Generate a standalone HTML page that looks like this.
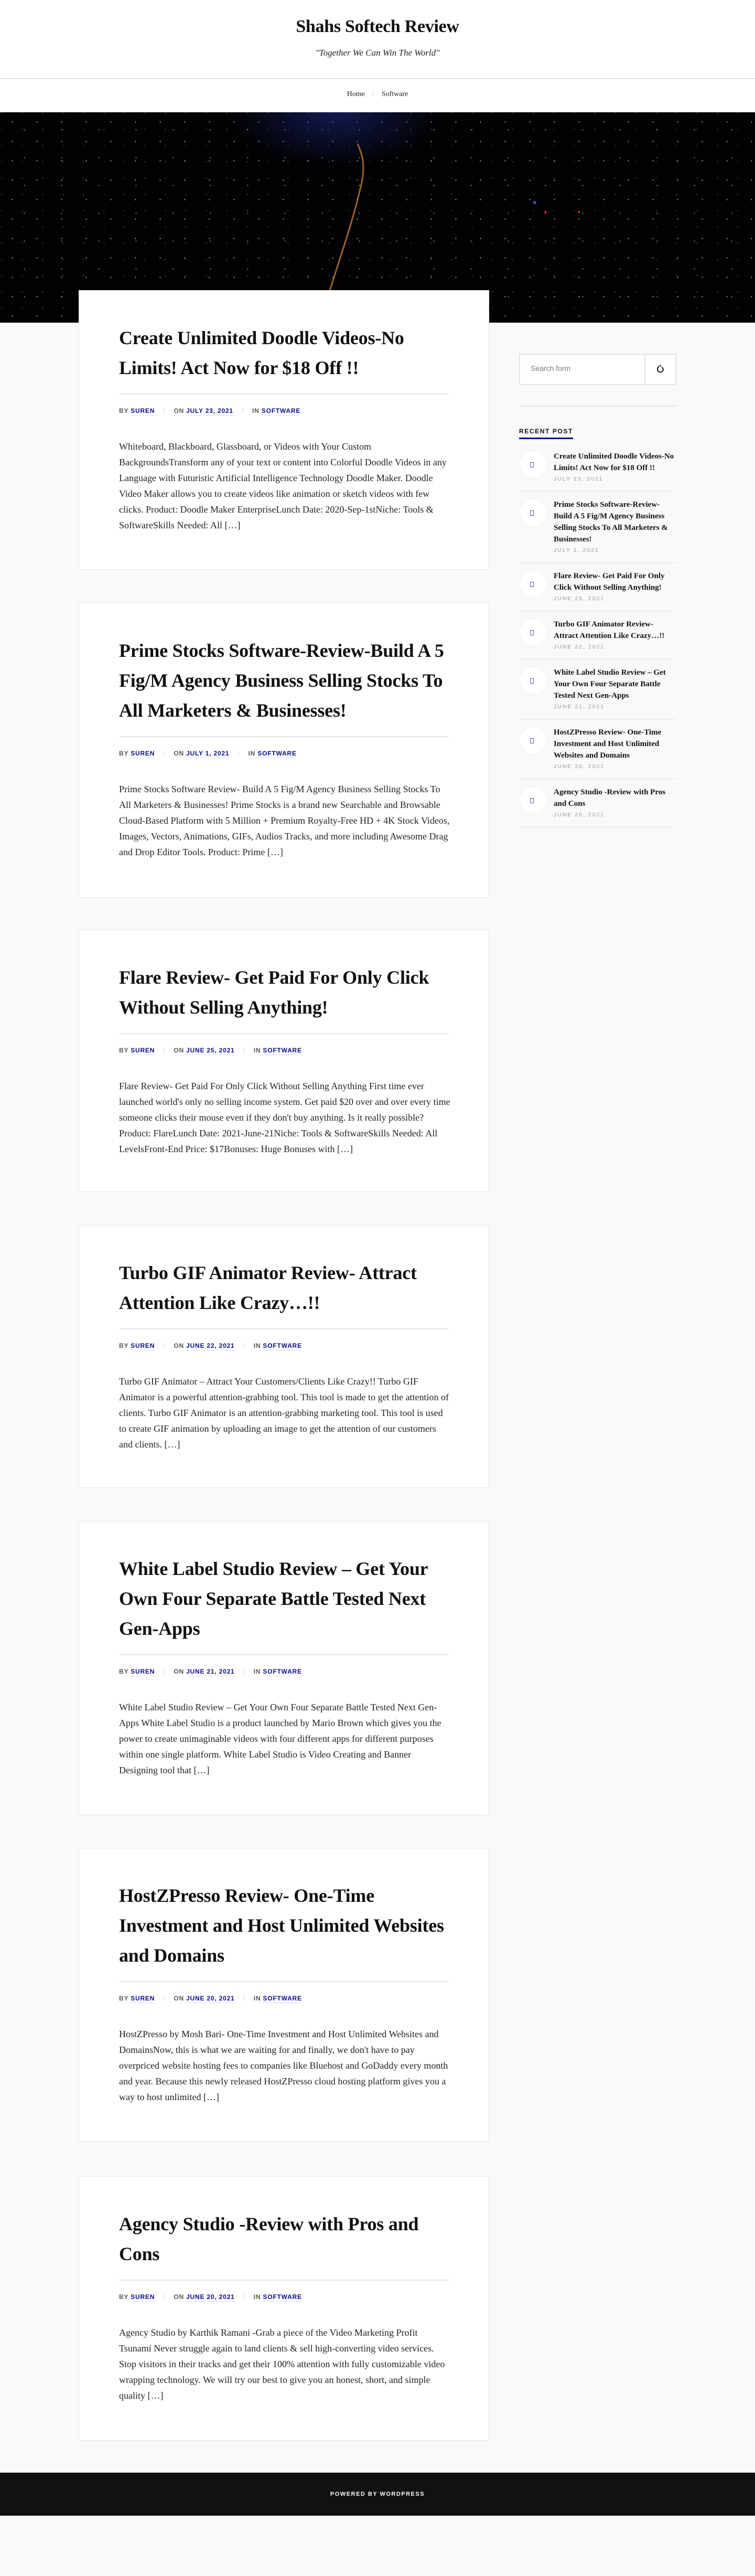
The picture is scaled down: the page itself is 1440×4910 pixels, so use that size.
<!DOCTYPE html>
<html><head><meta charset="utf-8"><style>
*{box-sizing:border-box;margin:0;padding:0}
body{width:1440px;height:4910px;background:#f9f9f9;font-family:"Liberation Serif",serif;color:#111;position:relative;overflow:hidden}
header{position:absolute;top:0;left:0;width:1440px;height:214px;background:#fff}
.site-title{position:absolute;top:32px;width:100%;text-align:center;font-size:34px;font-weight:bold;letter-spacing:-0.3px}
.tag{position:absolute;top:91px;width:100%;text-align:center;font-size:17px;font-style:italic;color:#222}
.hline{position:absolute;top:149px;left:0;width:100%;height:2px;background:#e2e2e2}
nav{position:absolute;top:172px;width:100%;text-align:center;font-size:14px;color:#222}
nav span.s{color:#ccc;margin:0 14px}
.hero{position:absolute;top:214px;left:0;width:1440px;height:401px;background:
radial-gradient(ellipse 200px 100px at 640px 0px,rgba(30,40,130,.6),transparent),
radial-gradient(circle,rgba(220,220,220,.8) 0.8px,transparent 1.3px) 0 0/47px 37px,
radial-gradient(circle,rgba(233,199,154,.7) 0.8px,transparent 1.3px) 11px 7px/71px 53px,
radial-gradient(circle,rgba(180,180,180,.5) 0.7px,transparent 1.2px) 23px 17px/39px 31px,
#020204}
.card{position:absolute;left:150px;width:783px;background:#fff;border:1px solid #e6e6e6;padding:62px 70px 0 76px}
.card h2{font-size:36px;line-height:57px;font-weight:bold;color:#111;letter-spacing:-0.2px;padding-bottom:20px;border-bottom:2px solid #e6e6e6;margin-right:6px}
.meta{margin-top:24px;font-family:"Liberation Sans",sans-serif;font-size:12px;font-weight:bold;letter-spacing:0.8px;color:#555;text-transform:uppercase}
.meta a{color:#0a0a8c;text-decoration:none;border-bottom:1px solid #ddd;padding-bottom:1px}
.meta .sl{color:#ccc;margin:0 16px;font-weight:normal}
.ex{margin-top:46px;font-size:18px;line-height:30px;color:#222}
.search{position:absolute;top:674px;left:990px;width:300px;height:60px;background:#fff;border:2px solid #e2e2e2}
.search .ph{position:absolute;left:20px;top:18px;font-family:"Liberation Sans",sans-serif;font-size:14px;color:#777}
.search .btn{position:absolute;right:0;top:0;width:59px;height:56px;border-left:2px solid #e2e2e2}
.rp{position:absolute;top:773px;left:990px;width:300px;border-top:2px solid #e4e4e4}
.rph{position:absolute;top:815px;left:990px;font-family:"Liberation Sans",sans-serif;font-weight:bold;font-size:12px;letter-spacing:1.6px;padding-bottom:5px;border-bottom:3px solid #0a0a8c;color:#111}
.list{position:absolute;top:845px;left:990px;width:300px}
.it{position:relative;padding:14px 0 15px 66px;border-bottom:1px solid #e4e4e4}
.it .th{position:absolute;left:0;top:13px;width:54px;height:54px;border-radius:50%;background:#fff;border:1px solid #eee}
.it .th:after{content:"";position:absolute;left:20px;top:22px;width:5px;height:8px;border:1px solid #5555bb}
.it .t{font-size:15px;line-height:22px;font-weight:bold;color:#111}
.it .d{font-family:"Liberation Sans",sans-serif;font-size:10.5px;letter-spacing:2px;color:#999;line-height:16px;margin-top:2px}
footer{position:absolute;top:4713px;left:0;width:1440px;height:82px;background:#111;color:#fff;text-align:center;font-family:"Liberation Sans",sans-serif;font-weight:bold;font-size:11px;letter-spacing:1.5px;line-height:82px}
</style></head><body>
<header>
<div class="site-title">Shahs Softech Review</div>
<div class="tag">"Together We Can Win The World"</div>
<div class="hline"></div>
<nav>Home<span class="s">/</span>Software</nav>
</header>
<div class="hero"><svg width="1440" height="401" style="position:absolute;left:0;top:0"><path d="M682 60 C690 80 700 100 686 150 C670 220 640 300 610 401" stroke="#d88a3a" stroke-width="3" fill="none" opacity=".7"/><circle cx="1020" cy="172" r="3" fill="#3b4bd8"/><circle cx="1040" cy="190" r="2" fill="#d22"/><circle cx="1104" cy="190" r="2" fill="#d22"/></svg></div>

<div class="card" style="top:553px;height:533px">
<h2>Create Unlimited Doodle Videos-No Limits! Act Now for $18 Off !!</h2>
<div class="meta">By <a>Suren</a><span class="sl">/</span>On <a>July 23, 2021</a><span class="sl">/</span>In <a>Software</a></div>
<div class="ex">Whiteboard, Blackboard, Glassboard, or Videos with Your Custom BackgroundsTransform any of your text or content into Colorful Doodle Videos in any Language with Futuristic Artificial Intelligence Technology Doodle Maker. Doodle Video Maker allows you to create videos like animation or sketch videos with few clicks. Product: Doodle Maker EnterpriseLunch Date: 2020-Sep-1stNiche: Tools &amp; SoftwareSkills Needed: All […]</div>
</div>

<div class="card" style="top:1149px;height:562px">
<h2>Prime Stocks Software-Review-Build A 5 Fig/M Agency Business Selling Stocks To All Marketers &amp; Businesses!</h2>
<div class="meta">By <a>Suren</a><span class="sl">/</span>On <a>July 1, 2021</a><span class="sl">/</span>In <a>Software</a></div>
<div class="ex">Prime Stocks Software Review- Build A 5 Fig/M Agency Business Selling Stocks To All Marketers &amp; Businesses! Prime Stocks is a brand new Searchable and Browsable Cloud-Based Platform with 5 Million + Premium Royalty-Free HD + 4K Stock Videos, Images, Vectors, Animations, GIFs, Audios Tracks, and more including Awesome Drag and Drop Editor Tools. Product: Prime […]</div>
</div>

<div class="card" style="top:1772px;height:500px">
<h2>Flare Review- Get Paid For Only Click Without Selling Anything!</h2>
<div class="meta">By <a>Suren</a><span class="sl">/</span>On <a>June 25, 2021</a><span class="sl">/</span>In <a>Software</a></div>
<div class="ex">Flare Review- Get Paid For Only Click Without Selling Anything First time ever launched world's only no selling income system. Get paid $20 over and over every time someone clicks their mouse even if they don't buy anything. Is it really possible? Product: FlareLunch Date: 2021-June-21Niche: Tools &amp; SoftwareSkills Needed: All LevelsFront-End Price: $17Bonuses: Huge Bonuses with […]</div>
</div>

<div class="card" style="top:2335px;height:501px">
<h2>Turbo GIF Animator Review- Attract Attention Like Crazy…!!</h2>
<div class="meta">By <a>Suren</a><span class="sl">/</span>On <a>June 22, 2021</a><span class="sl">/</span>In <a>Software</a></div>
<div class="ex">Turbo GIF Animator – Attract Your Customers/Clients Like Crazy!! Turbo GIF Animator is a powerful attention-grabbing tool. This tool is made to get the attention of clients. Turbo GIF Animator is an attention-grabbing marketing tool. This tool is used to create GIF animation by uploading an image to get the attention of our customers and clients. […]</div>
</div>

<div class="card" style="top:2899px;height:561px">
<h2>White Label Studio Review – Get Your Own Four Separate Battle Tested Next Gen-Apps</h2>
<div class="meta">By <a>Suren</a><span class="sl">/</span>On <a>June 21, 2021</a><span class="sl">/</span>In <a>Software</a></div>
<div class="ex">White Label Studio Review – Get Your Own Four Separate Battle Tested Next Gen-Apps White Label Studio is a product launched by Mario Brown which gives you the power to create unimaginable videos with four different apps for different purposes within one single platform. White Label Studio is Video Creating and Banner Designing tool that […]</div>
</div>

<div class="card" style="top:3522px;height:561px">
<h2>HostZPresso Review- One-Time Investment and Host Unlimited Websites and Domains</h2>
<div class="meta">By <a>Suren</a><span class="sl">/</span>On <a>June 20, 2021</a><span class="sl">/</span>In <a>Software</a></div>
<div class="ex">HostZPresso by Mosh Bari- One-Time Investment and Host Unlimited Websites and DomainsNow, this is what we are waiting for and finally, we don't have to pay overpriced website hosting fees to companies like Bluehost and GoDaddy every month and year. Because this newly released HostZPresso cloud hosting platform gives you a way to host unlimited […]</div>
</div>

<div class="card" style="top:4148px;height:504px">
<h2>Agency Studio -Review with Pros and Cons</h2>
<div class="meta">By <a>Suren</a><span class="sl">/</span>On <a>June 20, 2021</a><span class="sl">/</span>In <a>Software</a></div>
<div class="ex">Agency Studio by Karthik Ramani -Grab a piece of the Video Marketing Profit Tsunami Never struggle again to land clients &amp; sell high-converting video services. Stop visitors in their tracks and get their 100% attention with fully customizable video wrapping technology. We will try our best to give you an honest, short, and simple quality […]</div>
</div>

<div class="search"><div class="ph">Search form</div><div class="btn"><svg width="59" height="56"><path d="M26 22 C23 25 22 28 24 31 C26 34 31 34 33 31 C35 28 33 25 31 24" stroke="#111" stroke-width="2" fill="none"/><path d="M27 20 L30 22" stroke="#111" stroke-width="2"/></svg></div></div>
<div class="rp"></div>
<div class="rph">RECENT POST</div>
<div class="list">
<div class="it"><div class="th"></div><div class="t">Create Unlimited Doodle Videos-No Limits! Act Now for $18 Off !!</div><div class="d">JULY 23, 2021</div></div>
<div class="it"><div class="th"></div><div class="t">Prime Stocks Software-Review-Build A 5 Fig/M Agency Business Selling Stocks To All Marketers &amp; Businesses!</div><div class="d">JULY 1, 2021</div></div>
<div class="it"><div class="th"></div><div class="t">Flare Review- Get Paid For Only Click Without Selling Anything!</div><div class="d">JUNE 25, 2021</div></div>
<div class="it"><div class="th"></div><div class="t">Turbo GIF Animator Review- Attract Attention Like Crazy…!!</div><div class="d">JUNE 22, 2021</div></div>
<div class="it"><div class="th"></div><div class="t">White Label Studio Review – Get Your Own Four Separate Battle Tested Next Gen-Apps</div><div class="d">JUNE 21, 2021</div></div>
<div class="it"><div class="th"></div><div class="t">HostZPresso Review- One-Time Investment and Host Unlimited Websites and Domains</div><div class="d">JUNE 20, 2021</div></div>
<div class="it"><div class="th"></div><div class="t">Agency Studio -Review with Pros and Cons</div><div class="d">JUNE 20, 2021</div></div>
</div>

<footer>POWERED BY WORDPRESS</footer>
</body></html>
